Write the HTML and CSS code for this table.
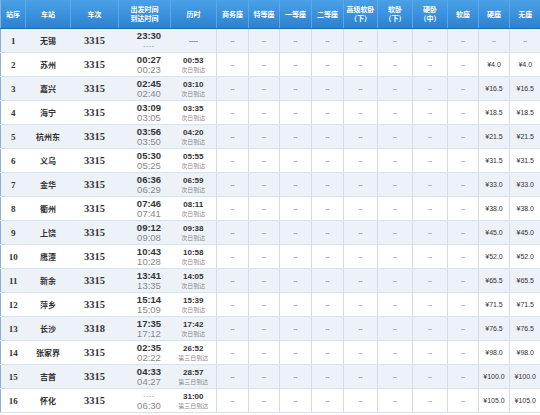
FILE: index.html
```html
<!DOCTYPE html>
<html lang="zh">
<head>
<meta charset="utf-8">
<link rel="stylesheet" href="styles.css">
</head>
<body>
<table class="tt">
<colgroup>
<col style="width:25px"><col style="width:45px"><col style="width:48px"><col style="width:52px"><col style="width:46px">
<col style="width:32px"><col style="width:31px"><col style="width:32px"><col style="width:32px"><col style="width:34px">
<col style="width:35px"><col style="width:35px"><col style="width:31px"><col style="width:31px"><col style="width:31px">
</colgroup>
<thead>
<tr>
<th>站序</th><th>车站</th><th>车次</th><th class="two">出发时间<br>到达时间</th><th>历时</th>
<th>商务座</th><th>特等座</th><th>一等座</th><th>二等座</th><th class="two">高级软卧<br>（下）</th>
<th class="two">软卧<br>（下）</th><th class="two">硬卧<br>（中）</th><th>软座</th><th>硬座</th><th>无座</th>
</tr>
</thead>
<tbody id="rows"></tbody>
</table>
<script src="app.js"></script>
</body>
</html>
```
FILE: app.js
```js
const data = [
  [1,"无锡","3315","23:30","----","----","",null],
  [2,"苏州","3315","00:27","00:23","00:53","次日到达","4.0"],
  [3,"嘉兴","3315","02:45","02:40","03:10","次日到达","16.5"],
  [4,"海宁","3315","03:09","03:05","03:35","次日到达","18.5"],
  [5,"杭州东","3315","03:56","03:50","04:20","次日到达","21.5"],
  [6,"义乌","3315","05:30","05:25","05:55","次日到达","31.5"],
  [7,"金华","3315","06:36","06:29","06:59","次日到达","33.0"],
  [8,"衢州","3315","07:46","07:41","08:11","次日到达","38.0"],
  [9,"上饶","3315","09:12","09:08","09:38","次日到达","45.0"],
  [10,"鹰潭","3315","10:43","10:28","10:58","次日到达","52.0"],
  [11,"新余","3315","13:41","13:35","14:05","次日到达","65.5"],
  [12,"萍乡","3315","15:14","15:09","15:39","次日到达","71.5"],
  [13,"长沙","3318","17:35","17:12","17:42","次日到达","76.5"],
  [14,"张家界","3315","02:35","02:22","26:52","第三日到达","98.0"],
  [15,"吉首","3315","04:33","04:27","28:57","第三日到达","100.0"],
  [16,"怀化","3315","----","06:30","31:00","第三日到达","105.0"]
];
const tb = document.getElementById("rows");
let html = "";
for (const r of data) {
  const [n, st, tr, dep, arr, dur, note, price] = r;
  html += '<tr class="' + (n % 2 ? "odd" : "even") + '">';
  html += '<td class="num">' + n + '</td>';
  html += '<td class="st">' + st + '</td>';
  html += '<td class="tr">' + tr + '</td>';
  html += '<td class="time"><div class="' + (dep === "----" ? "dashl" : "dep") + '">' + dep + '</div><div class="' + (arr === "----" ? "dashl" : "arr") + '">' + arr + '</div></td>';
  if (note) {
    html += '<td class="dur"><div class="durt">' + dur + '</div><div class="note">' + note + '</div></td>';
  } else {
    html += '<td class="dur"><span class="long"></span></td>';
  }
  for (let i = 0; i < 8; i++) html += '<td class="seat">--</td>';
  if (price) {
    html += '<td class="seat price">¥' + price + '</td><td class="seat price">¥' + price + '</td>';
  } else {
    html += '<td class="seat">--</td><td class="seat">--</td>';
  }
  html += '</tr>';
}
tb.innerHTML = html;
```
FILE: styles.css
```css
html, body {
  margin: 0;
  padding: 0;
  background: #ffffff;
}
.tt {
  width: 540px;
  table-layout: fixed;
  border-collapse: collapse;
  font-family: "Liberation Sans", "Noto Sans CJK SC", sans-serif;
  border-left: 1px solid #8fb0d4;
  border-bottom: 1px solid #4b8fd0;
}
.tt th {
  height: 28px;
  padding: 0;
  background: linear-gradient(#4aa0e6, #2d82d0);
  border-bottom: 1px solid #1f68b4;
  border-left: 1px solid #5aa6e6;
  color: #ffffff;
  font-family: "Noto Sans CJK SC", sans-serif;
  font-weight: 700;
  font-size: 7px;
  line-height: 9px;
  text-align: center;
  vertical-align: middle;
}
.tt th:first-child { border-left: none; }
.tt td {
  height: 23px;
  padding: 0;
  border-bottom: 1px solid #dbe1ea;
  text-align: center;
  vertical-align: middle;
  color: #333;
}
.odd td { background: #edf1f8; }
.even td { background: #ffffff; }
.num {
  font-family: "Liberation Serif", serif;
  font-weight: 700;
  font-size: 9px;
}
.st {
  font-family: "Noto Sans CJK SC", sans-serif;
  font-weight: 700;
  font-size: 8px;
}
.tr {
  font-family: "Liberation Serif", serif;
  font-weight: 700;
  font-size: 10.5px;
  color: #555;
}
.time { text-align: left; }
.time div { padding-left: 9px; }
.dep {
  font-weight: 700;
  font-size: 9.5px;
  line-height: 10px;
  color: #333;
}
.arr {
  font-size: 9.5px;
  line-height: 10px;
  color: #888;
}
.dashl {
  font-size: 7px;
  line-height: 10px;
  color: #999;
  letter-spacing: 0.5px;
}
.durt {
  font-weight: 700;
  font-size: 8px;
  line-height: 9px;
  color: #333;
}
.note {
  font-family: "Noto Sans CJK SC", sans-serif;
  font-size: 6px;
  line-height: 9px;
  color: #888;
}
.long {
  display: inline-block;
  width: 9px;
  height: 1px;
  background: #999;
  vertical-align: middle;
}
.seat {
  border-left: 1px solid #d5dce6;
  font-size: 6px;
  color: #aaa;
}
.price {
  color: #eba05a;
  font-size: 7px;
}
```
